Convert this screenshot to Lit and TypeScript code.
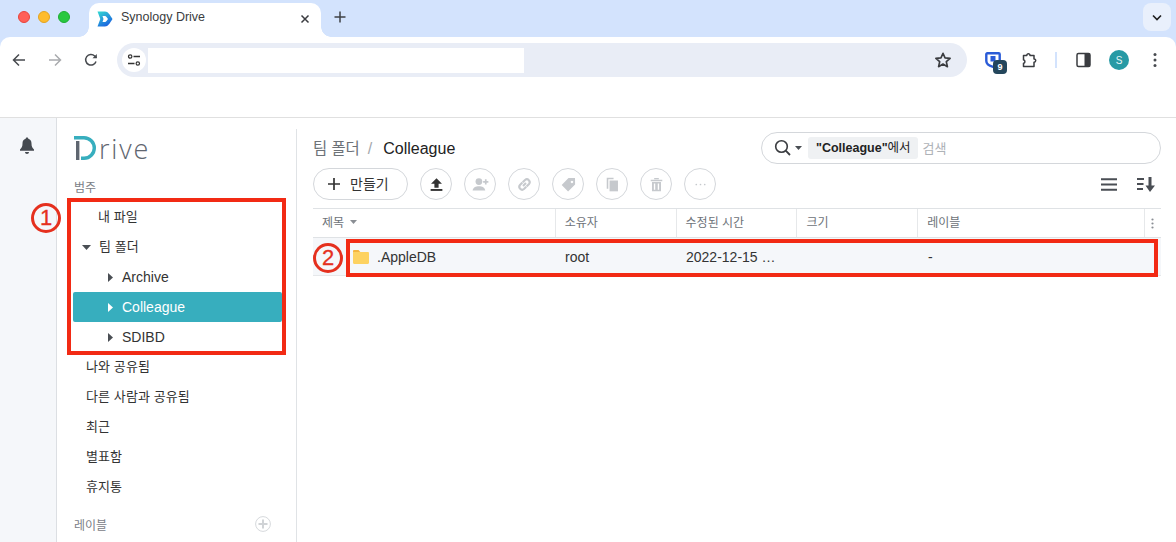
import { LitElement, html, css, svg } from "lit";
import { customElement } from "lit/decorators.js";

const folderIcon = html`<svg class="folder" width="16" height="14" viewBox="0 0 16 14">
  <path d="M0 1.200C0 .5.500 0 1.200 0H5.500l1.800 2H0z" fill="#f5b63f"/>
  <path d="M0 2h14.800c.7 0 1.200.5 1.200 1.200v9.600c0 .7-.5 1.200-1.200 1.200H1.200C.5 14 0 13.500 0 12.800z" fill="#fdd261"/>
</svg>`;

const G = "#c6c9cd";
const circleIcons = [
  svg`<path d="M10 4 4.800 9.400h3.200v3.800h4V9.400h3.200z" fill="#333"/><rect x="4.400" y="14.300" width="11.200" height="1.800" fill="#333"/>`,
  svg`<circle cx="8.500" cy="7.200" r="3.200" fill="${G}"/><path d="M2.500 15.800c0-2.800 3-4.200 6-4.200s6 1.400 6 4.200z" fill="${G}"/><path d="M15 5v5M12.500 7.500h5" stroke="${G}" stroke-width="1.600"/>`,
  svg`<path d="M8.600 11.400l2.800-2.800M8 8.200 5.700 10.500a2.700 2.700 0 0 0 3.800 3.800L11.700 12.100M12 11.800l2.300-2.300a2.700 2.700 0 0 0-3.800-3.800L8.300 7.900" fill="none" stroke="${G}" stroke-width="2"/>`,
  svg`<path d="M3.500 10.500 10 3.800l6.200.1.100 6.200-6.700 6.500zm9.800-4.100a1.200 1.200 0 1 0 .01 0z" fill="${G}" fill-rule="evenodd"/>`,
  svg`<path d="M4.500 3.500h6.500V5H6v9H4.500z" fill="${G}"/><rect x="7.200" y="6.200" width="8" height="10.300" fill="${G}"/>`,
  svg`<path d="M4.500 5.400h11v1.400h-11zM7.800 3.800h4.400V5H7.800zM5.700 7.600h8.600v8.800H5.700zm1.800 1.500v5.800h1.300V9.100zm3.700 0v5.800h1.300V9.100z" fill="${G}" fill-rule="evenodd"/>`,
  svg`<circle cx="6" cy="10" r=".8" fill="${G}"/><circle cx="10" cy="10" r=".8" fill="${G}"/><circle cx="14" cy="10" r=".8" fill="${G}"/>`,
];

@customElement("app-root")
export class AppRoot extends LitElement {
  static styles = css`
    :host { display: block; width: 1176px; height: 542px; overflow: hidden; background: #fff; font-family: "Liberation Sans", Arial, "Noto Sans CJK KR", sans-serif; position: relative; color: #333; }
    .chrome { background: #d3e3fd; }
    .tabstrip { height: 37px; display: flex; align-items: flex-start; position: relative; }
    .lights { display: flex; gap: 8px; padding: 11px 0 0 18px; width: 89px; box-sizing: border-box; }
    .lights i { width: 12px; height: 12px; border-radius: 50%; display: block; box-sizing: border-box; }
    .red { background: #ff5f57; border: 1px solid #e8443b; }
    .amber { background: #febc2e; border: 1px solid #e3a321; }
    .green { background: #28c840; border: 1px solid #1fae33; }
    .tab { width: 232px; height: 34px; margin-top: 3px; background: #fff; border-radius: 10px 10px 0 0; display: flex; align-items: center; position: relative; box-sizing: border-box; padding: 0 0 0 8px; color: #3a3c40; font-size: 12.5px; }
    .tab::before, .tab::after { content: ""; position: absolute; bottom: 0; width: 10px; height: 10px; }
    .tab::before { left: -10px; background: radial-gradient(circle at 0 0, transparent 9.500px, #fff 10px); }
    .tab::after { right: -10px; background: radial-gradient(circle at 100% 0, transparent 9.500px, #fff 10px); }
    .tab .title { margin-left: 8px; flex: 1; padding-bottom: 6px; }
    .tab .fav { margin-bottom: 3px; }
    .tab .x { margin: 0 11px 3px 0; }
    .plus { margin: 11px 0 0 13px; }
    .chev { position: absolute; right: 5px; top: 3px; width: 28px; height: 28px; border-radius: 8px; background: #e9f0fc; display: flex; align-items: center; justify-content: center; }
    .toolbar { height: 34px; padding-top: 6px; background: #fff; border-radius: 10px 10px 0 0; display: flex; align-items: center; position: relative; }
    .nav { display: flex; margin-left: 12px; gap: 22px; width: 105px; flex: none; }
    .nav svg { display: block; }
    .omni { width: 850px; height: 34px; background: #e9edf6; border-radius: 17px; display: flex; align-items: center; box-sizing: border-box; padding-left: 5px; position: relative; flex: none; }
    .tune { width: 24px; height: 24px; border-radius: 50%; background: #fff; display: flex; align-items: center; justify-content: center; }
    .urlbox { width: 376px; height: 25px; background: #fff; margin-left: 2px; }
    .star { position: absolute; right: 15px; top: 8px; }
    .exts { display: flex; align-items: center; margin-left: 18px; position: relative; }
    .badge { position: absolute; left: 8px; top: 10px; width: 14px; height: 14px; border-radius: 4px; background: #24465c; color: #fff; font-size: 9px; font-weight: 700; display: flex; align-items: center; justify-content: center; }
    .puzzle { margin-left: 21px; }
    .sep { width: 2px; height: 16px; background: #d3e3fd; margin: 0 19px 0 16px; }
    .avatar { width: 20px; height: 20px; border-radius: 50%; background: #279aa5; color: #e8f6f7; font-size: 10px; display: flex; align-items: center; justify-content: center; margin-left: 18px; }
    .dots { margin-left: 24px; }
    .bookmarks { height: 40px; background: #fff; border-bottom: 1px solid #e0e0e0; }
    .page { display: flex; height: 424px; }
    .rail { width: 56px; background: #f5f7fa; border-right: 1px solid #dcdfe3; display: flex; justify-content: center; padding-top: 19px; flex: none; }
    .rail svg { display: block; margin-right: 2px; }
    .side { width: 239px; flex: none; border-right: 1px solid #e0e3e6; position: relative; margin-top: 11px; }
    .logo { display: flex; align-items: flex-end; height: 26px; padding: 5px 0 0 17px; }
    .rive { font-family: "Open Sans", sans-serif; font-size: 27px; font-weight: 300; letter-spacing: 1.800px; line-height: 26px; color: #5f6670; margin-left: 3px; position: relative; top: 2px; }
    .cat { font-size: 12px; color: #7b8087; padding-left: 17px; height: 16px; line-height: 16px; margin-top: 20px; }
    .tree { margin: 6px 0 0 16px; width: 209px; }
    .row { height: 30px; display: flex; align-items: center; font-size: 13px; color: #333; border-radius: 2px; }
    .row .label { letter-spacing: .1px; margin-bottom: 3px; }
    .row .en { font-size: 14px; letter-spacing: 0; margin-bottom: 0; }
    .row.l0 { padding-left: 25px; }
    .row.l1 { padding-left: 9px; }
    .row.l1 svg { margin-right: 8px; }
    .row.l2 { padding-left: 35px; }
    .row.l2 svg { margin-right: 9px; }
    .row.active { background: #37aebe; color: #fff; }
    .rest { padding-left: 29px; }
    .rest .row { padding: 0; }
    .labhead { display: flex; justify-content: space-between; align-items: center; margin: 13px 25px 0 17px; height: 18px; font-size: 12px; color: #7b8087; }
    .main { flex: 1; position: relative; padding: 11px 15px 0 16px; box-sizing: border-box; min-width: 0; }
    .crumbrow { display: flex; justify-content: space-between; height: 39px; align-items: flex-start; }
    .crumb { display: flex; font-size: 16px; color: #222; margin-top: 11px; line-height: 18px; }
    .crumb .team { color: #6d7278; font-size: 15.400px; }
    .crumb .slash { color: #a4a8ad; margin: 0 11px 0 8px; }
    .search { width: 400px; height: 32px; border: 1px solid #d4d7db; border-radius: 16px; box-sizing: border-box; display: flex; align-items: center; margin: 3px 0 0 0; padding-left: 12px; }
    .caret { margin-left: 3px; }
    .scope { background: #eff1f3; border-radius: 3px; font-size: 12.500px; height: 22px; line-height: 22px; padding: 0 7px 0 8px; color: #222; margin-left: 6px; }
    .scope b { font-weight: 700; }
    .ph { margin: 0 0 2px 5px; font-size: 13px; color: #aeb2b7; }
    .actions { display: flex; align-items: center; height: 32px; }
    .make { width: 95px; height: 32px; border: 1px solid #d4d7db; border-radius: 16px; display: flex; align-items: center; box-sizing: border-box; padding-left: 14px; font-size: 14px; color: #333; gap: 10px; margin-right: 12px; }
    .make span { margin-bottom: 2px; }
    .cbtn { width: 32px; height: 32px; border: 1px solid #d4d7db; border-radius: 50%; box-sizing: border-box; display: flex; align-items: center; justify-content: center; margin-right: 12px; }
    .right { margin-left: auto; display: flex; align-items: center; gap: 20px; margin-right: 6px; }
    .thead { margin-top: 8px; height: 28px; display: flex; border-top: 1px solid #dfe2e5; border-bottom: 1px solid #dfe2e5; font-size: 12px; color: #6d7278; }
    .c { display: flex; align-items: center; box-sizing: border-box; padding-left: 9px; }
    .thead .c { border-right: 1px solid #e6e8ea; padding-bottom: 3px; }
    .thead .c:last-child { border-right: 0; padding: 0 0 0 6px; }
    .sortcaret { margin-left: 6px; }
    .w1 { width: 243px; } .w2 { width: 121px; } .w3 { width: 121px; } .w4 { width: 121px; } .w5 { width: 227px; } .w6 { width: 16px; }
    .tbody { height: 37px; display: flex; align-items: center; background: #f5f7fa; font-size: 14px; color: #333; border-bottom: 1px solid #e6e8ea; }
    .tbody .w1 { padding-left: 40px; gap: 8px; }
    .annot { position: absolute; border: 4px solid #f22a14; box-sizing: border-box; pointer-events: none; }
    .a1 { left: 67px; top: 198px; width: 219px; height: 157px; }
    .a2 { left: 346px; top: 239px; height: 38px; width: 812px; }
    .num { position: absolute; color: #e5301e; border: 3px solid #e5301e; border-radius: 50%; width: 30px; height: 30px; box-sizing: border-box; display: flex; align-items: center; justify-content: center; font-size: 22px; -webkit-text-stroke: .3px #e5301e; }
    .n1 { left: 31px; top: 203px; }
    .n2 { left: 313px; top: 243px; }
  `;

  render() {
    return html`
      <div class="chrome">
      <div class="tabstrip">
        <div class="lights"><i class="red"></i><i class="amber"></i><i class="green"></i></div>
        <div class="tab">
          <svg class="fav" width="16" height="16" viewBox="0 0 16 16">
            <defs><linearGradient id="fg" x1="0" y1="0" x2=".6" y2="1"><stop offset="0" stop-color="#33dcd2"/><stop offset="1" stop-color="#1b63e0"/></linearGradient></defs>
            <path fill-rule="evenodd" d="M.5.500h7.500c3 0 5 3.500 7.500 7.500-2.500 4-4.500 7.500-7.500 7.500H.5l2.800-7.500zM5.500 5l1 3-1 3h2.500c1 0 2-1.500 3-3-1-1.500-2-3-3-3z" fill="url(#fg)"/>
          </svg>
          <span class="title">Synology Drive</span>
          <svg class="x" width="10" height="10" viewBox="0 0 10 10"><path d="M1.500 1.500l7 7M8.500 1.500l-7 7" stroke="#3a3c40" stroke-width="1.500"/></svg>
        </div>
        <svg class="plus" width="12" height="12" viewBox="0 0 12 12"><path d="M6 .5v11M.5 6h11" stroke="#3f4246" stroke-width="1.500"/></svg>
        <div class="chev"><svg width="10" height="7" viewBox="0 0 10 7"><path d="M1 1.500l4 4 4-4" fill="none" stroke="#1f1f1f" stroke-width="1.600"/></svg></div>
      </div>
      <div class="toolbar">
        <div class="nav">
          <svg width="14" height="14" viewBox="0 0 14 14"><path d="M13 7H2M7 1.500 1.500 7 7 12.500" fill="none" stroke="#474a4f" stroke-width="1.500"/></svg>
          <svg width="14" height="14" viewBox="0 0 14 14"><path d="M1 7h11M7 1.500 12.500 7 7 12.500" fill="none" stroke="#a9abae" stroke-width="1.500"/></svg>
          <svg width="14" height="14" viewBox="0 0 14 14"><path d="M12 8.500A5.300 5.300 0 1 1 10.700 3L12.500 4.700" fill="none" stroke="#474a4f" stroke-width="1.500"/><path d="M12.800 1v4.300H8.500z" fill="#474a4f"/></svg>
        </div>
        <div class="omni">
          <div class="tune"><svg width="14" height="14" viewBox="0 0 14 14"><circle cx="3.200" cy="3.500" r="1.700" fill="none" stroke="#333" stroke-width="1.200"/><path d="M6.500 3.500h6.500M1 10.500h6.500" stroke="#333" stroke-width="1.300"/><circle cx="10.800" cy="10.500" r="1.700" fill="none" stroke="#333" stroke-width="1.200"/></svg></div>
          <div class="urlbox"></div>
          <svg class="star" width="18" height="18" viewBox="0 0 24 24"><path d="M12 3l2.700 6.200 6.800.6-5.100 4.500 1.500 6.600L12 17.400 6.100 20.900l1.500-6.600L2.500 9.800l6.800-.6z" fill="none" stroke="#3a3c40" stroke-width="2.200" stroke-linejoin="round"/></svg>
        </div>
        <div class="exts">
          <svg width="16" height="16" viewBox="0 0 16 16"><path d="M2.300 1.300h11.400c.6 0 1 .4 1 1V9c0 2.500-3 4.800-6.700 5.800C4.300 13.800 1.300 11.500 1.300 9V2.300c0-.6.400-1 1-1z" fill="#fff" stroke="#2a5bd7" stroke-width="2.400" stroke-linejoin="round"/><rect x="5.500" y="4" width="5" height="5.500" fill="#2a5bd7"/></svg>
          <div class="badge">9</div>
          <svg class="puzzle" width="17" height="17" viewBox="0 0 17 17"><path d="M1.500 3.500h3.300c-.2-2.300 3.400-2.300 3.200 0H12v3.500c2.300-.2 2.300 3.200 0 3.200v4.300H1.500v-3.300c1.800.2 1.800-3.500 0-3.200z" fill="none" stroke="#3a3c40" stroke-width="1.500" stroke-linejoin="round"/></svg>
          <div class="sep"></div>
          <svg width="15" height="16" viewBox="0 0 15 16"><rect x="1" y="1.500" width="13" height="13" rx="1.500" fill="#fff" stroke="#3a3c40" stroke-width="1.500"/><path d="M8.500 1.500H13c.6 0 1 .4 1 1v11c0 .6-.4 1-1 1H8.500z" fill="#3a3c40"/></svg>
          <div class="avatar">S</div>
          <svg class="dots" width="4" height="16" viewBox="0 0 4 16"><circle cx="2" cy="2.500" r="1.500" fill="#474a4f"/><circle cx="2" cy="8" r="1.500" fill="#474a4f"/><circle cx="2" cy="13.500" r="1.500" fill="#474a4f"/></svg>
        </div>
      </div>
      </div>
      <div class="bookmarks"></div>
      <div class="page">
        <div class="rail">
          <svg width="16" height="18" viewBox="0 0 16 18"><path d="M8 .5c.8 0 1.300.5 1.300 1.300 2.300.6 3.200 2.500 3.200 4.700 0 3 .8 4.500 2.500 6v1.300H1V12.500c1.700-1.500 2.500-3 2.500-6 0-2.200.9-4.100 3.200-4.700C6.700 1 7.200.5 8 .5zM6 15h4c0 1.200-.9 2-2 2s-2-.8-2-2z" fill="#454a50"/></svg>
        </div>
        <div class="side">
          <div class="logo">
            <svg width="22" height="24" viewBox="0 0 22 24"><rect x="2" y="5" width="3.400" height="19" fill="#5f6670"/><path d="M0 0h10a12 12 0 0 1 0 24H7v-3.400h3a8.600 8.600 0 0 0 0-17.200H0z" fill="#37aebe"/></svg>
            <span class="rive">rive</span>
          </div>
          <div class="cat">범주</div>
          <div class="tree">
            <div class="row l0"><span class="label">내 파일</span></div>
            <div class="row l1"><svg width="9" height="5" viewBox="0 0 9 5"><path d="M0 0h9L4.500 5z" fill="#4a4e54"/></svg><span class="label">팀 폴더</span></div>
            <div class="row l2"><svg width="5" height="9" viewBox="0 0 5 9"><path d="M0 0v9l5-4.500z" fill="#4a4e54"/></svg><span class="label en">Archive</span></div>
            <div class="row l2 active"><svg width="5" height="9" viewBox="0 0 5 9"><path d="M0 0v9l5-4.500z" fill="#fff"/></svg><span class="label en">Colleague</span></div>
            <div class="row l2"><svg width="5" height="9" viewBox="0 0 5 9"><path d="M0 0v9l5-4.500z" fill="#4a4e54"/></svg><span class="label en">SDIBD</span></div>
          </div>
          <div class="rest">
            <div class="row"><span class="label">나와 공유됨</span></div>
            <div class="row"><span class="label">다른 사람과 공유됨</span></div>
            <div class="row"><span class="label">최근</span></div>
            <div class="row"><span class="label">별표함</span></div>
            <div class="row"><span class="label">휴지통</span></div>
          </div>
          <div class="labhead"><span>레이블</span>
            <svg width="16" height="16" viewBox="0 0 16 16"><circle cx="8" cy="8" r="7.400" fill="none" stroke="#d6d9dc"/><path d="M8 3.500v9M3.500 8h9" stroke="#d0d3d6" stroke-width="2"/></svg>
          </div>
        </div>
        <div class="main">
          <div class="crumbrow">
            <div class="crumb"><span class="team">팀 폴더</span><span class="slash">/</span><span>Colleague</span></div>
            <div class="search">
              <svg width="18" height="18" viewBox="0 0 18 18"><circle cx="7.500" cy="7.500" r="5.800" fill="none" stroke="#3a3c40" stroke-width="1.600"/><path d="M11.700 11.700 16 16" stroke="#3a3c40" stroke-width="1.800"/></svg>
              <svg class="caret" width="7" height="4" viewBox="0 0 7 4"><path d="M0 0h7L3.500 4z" fill="#4a4e54"/></svg>
              <span class="scope"><b>"Colleague"</b>에서</span>
              <span class="ph">검색</span>
            </div>
          </div>
          <div class="actions">
            <div class="make"><svg width="12" height="12" viewBox="0 0 12 12"><path d="M6 0v12M0 6h12" stroke="#333" stroke-width="1.700"/></svg><span>만들기</span></div>
            ${circleIcons.map(d => html`<div class="cbtn"><svg width="21" height="21" viewBox="0 0 20 20">${d}</svg></div>`)}
            <div class="right">
              <svg width="16" height="13" viewBox="0 0 16 13"><path d="M0 1.200h16M0 6.500h16M0 11.800h16" stroke="#4a4e54" stroke-width="1.900"/></svg>
              <svg width="18" height="15" viewBox="0 0 18 15"><path d="M0 2h7M0 7h6.500M0 12h6" stroke="#4a4e54" stroke-width="1.800"/><path d="M11.500 0h3v8.500H18L13 15 8.500 8.500h3z" fill="#4a4e54"/></svg>
            </div>
          </div>
          <div class="thead">
            <div class="c w1">제목<svg class="sortcaret" width="7" height="4" viewBox="0 0 7 4"><path d="M0 0h7L3.500 4z" fill="#8a8e94"/></svg></div>
            <div class="c w2">소유자</div>
            <div class="c w3">수정된 시간</div>
            <div class="c w4">크기</div>
            <div class="c w5">레이블</div>
            <div class="c w6"><svg width="3" height="11" viewBox="0 0 3 11"><circle cx="1.500" cy="1.500" r="1.100" fill="#8a8e94"/><circle cx="1.500" cy="5.500" r="1.100" fill="#8a8e94"/><circle cx="1.500" cy="9.500" r="1.100" fill="#8a8e94"/></svg></div>
          </div>
          <div class="tbody">
            <div class="c w1">${folderIcon}<span>.AppleDB</span></div>
            <div class="c w2">root</div>
            <div class="c w3">2022-12-15 …</div>
            <div class="c w4"></div>
            <div class="c w5">-</div>
          </div>
        </div>
      </div>
      <div class="annot a1"></div>
      <div class="annot a2"></div>
      <div class="num n1">1</div>
      <div class="num n2">2</div>
    `;
  }
}
